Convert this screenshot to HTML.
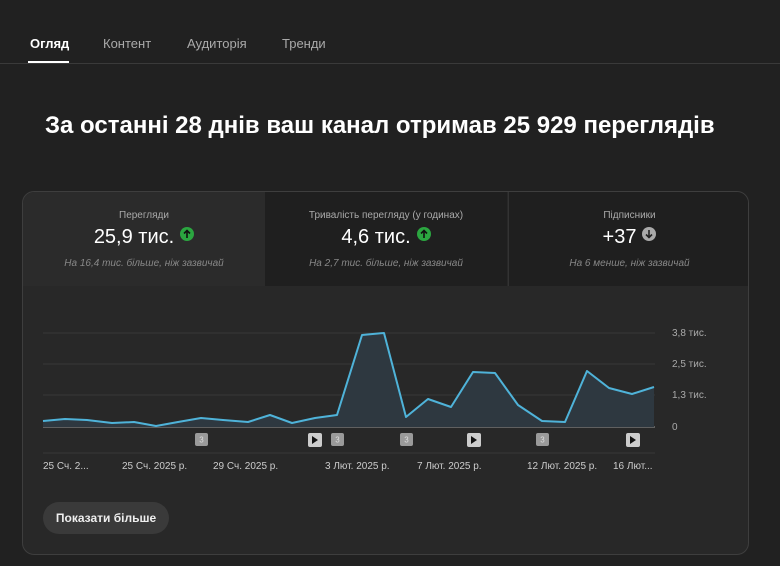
<!DOCTYPE html>
<html><head><meta charset="utf-8"><style>
body{margin:0;width:780px;height:566px;background:#212121;font-family:"Liberation Sans",sans-serif;position:relative;overflow:hidden;color:#fff}
.tab{position:absolute;top:36px;font-size:13px;color:#aaa}
.a{position:absolute}
.card{position:absolute;left:22px;top:191px;width:725px;height:362px;border:1px solid #3e3e3e;border-radius:12px;background:#282828;overflow:hidden}
.m{position:absolute;top:0;height:94px;text-align:center}
.m .t{font-size:10px;color:#aaa;margin-top:18px}
.m .v{font-size:20px;margin-top:5px;color:#fff}
.m .s{font-size:10px;color:#888;font-style:italic;margin-top:9px}
.ic{display:inline-block;width:14px;height:14px;border-radius:50%;vertical-align:2px;margin-left:6px;position:relative}
.lbl{position:absolute;font-size:10px;color:#aaa}
</style></head><body>
<div class="tab" style="left:30px;color:#fff;font-weight:bold">Огляд</div>
<div class="a" style="left:28px;top:61px;width:41px;height:2px;background:#fff"></div>
<div class="tab" style="left:103px">Контент</div>
<div class="tab" style="left:187px">Аудиторія</div>
<div class="tab" style="left:282px">Тренди</div>
<div class="a" style="left:0;top:63px;width:780px;height:1px;background:#3a3a3a"></div>
<div class="a" style="left:45px;top:112px;font-size:24px;font-weight:bold">За останні 28 днів ваш канал отримав 25 929 переглядів</div>
<div class="card">
<div class="m" style="left:0;width:242px;background:#2b2b2b"><div class="t">Перегляди</div><div class="v">25,9 тис.<span class="ic" style="background:#2ba640"><svg width="14" height="14" style="position:absolute;left:0;top:0"><path d="M7 11V4M4 6.5L7 3.5L10 6.5" stroke="#111" stroke-width="1.6" fill="none"/></svg></span></div><div class="s">На 16,4 тис. більше, ніж зазвичай</div></div>
<div class="m" style="left:242px;width:242px;background:#1f1f1f"><div class="t">Тривалість перегляду (у годинах)</div><div class="v">4,6 тис.<span class="ic" style="background:#2ba640"><svg width="14" height="14" style="position:absolute;left:0;top:0"><path d="M7 11V4M4 6.5L7 3.5L10 6.5" stroke="#111" stroke-width="1.6" fill="none"/></svg></span></div><div class="s">На 2,7 тис. більше, ніж зазвичай</div></div>
<div class="m" style="left:485px;width:241px;background:#1f1f1f;border-left:1px solid #333"><div class="t">Підписники</div><div class="v">+37<span class="ic" style="background:#aaa"><svg width="14" height="14" style="position:absolute;left:0;top:0"><path d="M7 3V10M4 7.5L7 10.5L10 7.5" stroke="#222" stroke-width="1.6" fill="none"/></svg></span></div><div class="s">На 6 менше, ніж зазвичай</div></div>
</div>
<svg class="a" style="left:0;top:0" width="780" height="566">
<g stroke="#383838" stroke-width="1"><line x1="43" y1="333" x2="655" y2="333"/><line x1="43" y1="364" x2="655" y2="364"/><line x1="43" y1="395" x2="655" y2="395"/><line x1="43" y1="453" x2="655" y2="453"/></g>
<line x1="43" y1="427" x2="655" y2="427" stroke="#999" stroke-width="1"/>
<polygon fill="#2e3840" points="43,421 65,419 87,420 112,423 134,422 156,426 178,422 201,418 223,420 248,422 270,415 292,423 315,418 337,415 362,335 384,333 406,417 428,399 451,407 473,372 495,373 518,405 542,421 565,422 587,371 609,388 632,394 654,387 654,427 43,427"/>
<polyline fill="none" stroke="#4fb3d9" stroke-width="2" stroke-linejoin="round" points="43,421 65,419 87,420 112,423 134,422 156,426 178,422 201,418 223,420 248,422 270,415 292,423 315,418 337,415 362,335 384,333 406,417 428,399 451,407 473,372 495,373 518,405 542,421 565,422 587,371 609,388 632,394 654,387"/>
<g fill="#9a9a9a"><rect x="195" y="433" width="13" height="13" rx="2"/><rect x="331" y="433" width="13" height="13" rx="2"/><rect x="400" y="433" width="13" height="13" rx="2"/><rect x="536" y="433" width="13" height="13" rx="2"/></g>
<g fill="#ddd" font-size="8" font-family="Liberation Sans" text-anchor="middle"><text x="201.5" y="442.5">3</text><text x="337.5" y="442.5">3</text><text x="406.5" y="442.5">3</text><text x="542.5" y="442.5">3</text></g>
<g fill="#ccc"><rect x="308" y="433" width="14" height="14" rx="2"/><rect x="467" y="433" width="14" height="14" rx="2"/><rect x="626" y="433" width="14" height="14" rx="2"/></g>
<g fill="#111"><path d="M312 436v8l6-4z"/><path d="M471 436v8l6-4z"/><path d="M630 436v8l6-4z"/></g>
</svg>
<div class="lbl" style="left:672px;top:328px">3,8 тис.</div>
<div class="lbl" style="left:672px;top:359px">2,5 тис.</div>
<div class="lbl" style="left:672px;top:390px">1,3 тис.</div>
<div class="lbl" style="left:672px;top:422px">0</div>
<div class="lbl" style="left:43px;top:461px;color:#ccc">25 Сч. 2...</div>
<div class="lbl" style="left:122px;top:461px;color:#ccc">25 Сч. 2025 р.</div>
<div class="lbl" style="left:213px;top:461px;color:#ccc">29 Сч. 2025 р.</div>
<div class="lbl" style="left:325px;top:461px;color:#ccc">3 Лют. 2025 р.</div>
<div class="lbl" style="left:417px;top:461px;color:#ccc">7 Лют. 2025 р.</div>
<div class="lbl" style="left:527px;top:461px;color:#ccc">12 Лют. 2025 р.</div>
<div class="lbl" style="left:613px;top:461px;color:#ccc">16 Лют...</div>
<div class="a" style="left:43px;top:502px;width:126px;height:32px;border-radius:16px;background:#3a3a3a;font-size:12px;font-weight:bold;line-height:32px;text-align:center;color:#eee">Показати більше</div>
</body></html>
